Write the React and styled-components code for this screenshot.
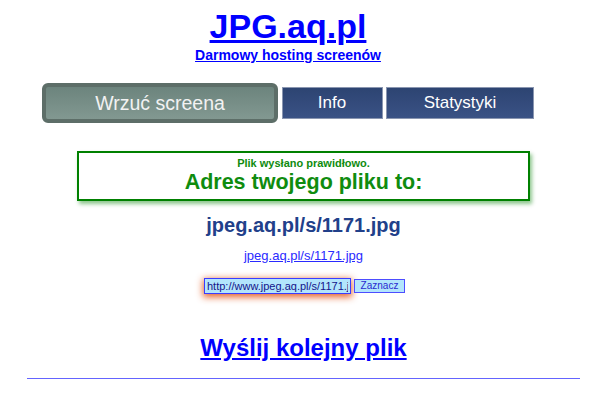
import React from 'react'
import styled, { createGlobalStyle } from 'styled-components'

const GlobalStyle = createGlobalStyle`
  body {
    margin: 0;
    background: #fff;
    font-family: 'Liberation Sans', Arial, sans-serif;
  }
`

const Header = styled.header`
  width: 576px;
  padding-top: 7px;
  text-align: center;
`

const Title = styled.a`
  display: inline-block;
  color: #0000ff;
  font-size: 34px;
  line-height: 38px;
  font-weight: 700;
  text-decoration: underline;
  text-decoration-thickness: 3px;
`

const Subtitle = styled.div`
  margin-top: 2px;
  line-height: 16px;

  a {
    color: #0000ff;
    font-size: 14px;
    font-weight: 700;
    text-decoration: underline;
  }
`

const Nav = styled.nav`
  display: flex;
  justify-content: center;
  align-items: center;
  gap: 3.5px;
  margin-top: 20px;
`

const NavItem = styled.div`
  box-sizing: border-box;
  width: ${(p) => p.$width}px;
  height: 32px;
  display: flex;
  align-items: center;
  justify-content: center;
  background: linear-gradient(#2d4472, #3a5285);
  border: 1px solid #8a96b0;
  color: #fff;
  font-size: 17px;
  cursor: pointer;
`

const ActiveItem = styled(NavItem)`
  height: 40px;
  background: linear-gradient(#6c847d, #829891);
  border: 4px solid #5d6e68;
  border-radius: 6px;
  color: #f2f2f2;
  font-size: 19.5px;
`

const Main = styled.main`
  margin-left: 27px;
  width: 553px;
  text-align: center;
`

const SuccessBox = styled.div`
  margin: 28px 50px 0;
  padding: 4px 0 5px;
  border: 2px solid #008000;
  box-shadow: 2px 3px 4px rgba(0, 128, 0, 0.45);
  color: #0f8c0f;
  font-weight: 700;
`

const SuccessNote = styled.div`
  font-size: 11px;
  line-height: 13px;
`

const SuccessHead = styled.div`
  font-size: 21.5px;
  line-height: 24px;
`

const FileUrl = styled.div`
  margin-top: 13px;
  color: #21408a;
  font-size: 20px;
  line-height: 23px;
  font-weight: 700;
`

const FileLink = styled.a`
  display: inline-block;
  margin-top: 11px;
  color: #2a2aff;
  font-size: 13px;
  line-height: 15px;
  text-decoration: underline;
`

const CopyRow = styled.div`
  display: flex;
  justify-content: center;
  align-items: center;
  gap: 3px;
  margin-top: 14px;
  padding-left: 2px;
`

const UrlInput = styled.input`
  box-sizing: border-box;
  width: 147px;
  height: 16px;
  padding: 0 2px;
  border: 1px solid #3b3bff;
  background: #b3e5fc;
  color: #14148a;
  font-family: 'Liberation Sans', Arial, sans-serif;
  font-size: 11px;
  box-shadow: 0 2px 7px 1px rgba(225, 80, 20, 0.9);
  outline: none;
`

const SelectButton = styled.button`
  box-sizing: border-box;
  width: 51px;
  height: 14px;
  padding: 0;
  border: 1px solid #4d4dff;
  background: #b3e5fc;
  color: #2a2ad0;
  font-family: 'Liberation Sans', Arial, sans-serif;
  font-size: 10px;
  line-height: 12px;
  cursor: pointer;
`

const NextLink = styled.a`
  display: inline-block;
  margin-top: 40px;
  color: #0000ff;
  font-size: 24px;
  line-height: 28px;
  font-weight: 700;
  text-decoration: underline;
`

const Rule = styled.hr`
  margin: 16px 0 0;
  border: 0;
  border-top: 1px solid #6464ff;
`

const App = () => {
  const url = 'http://www.jpeg.aq.pl/s/1171.jpg'

  return (
    <>
      <GlobalStyle />
      <Header>
        <Title href="#">JPG.aq.pl</Title>
        <Subtitle>
          <a href="#">Darmowy hosting screenów</a>
        </Subtitle>
        <Nav>
          <ActiveItem $width={236}>Wrzuć screena</ActiveItem>
          <NavItem $width={101}>Info</NavItem>
          <NavItem $width={148}>Statystyki</NavItem>
        </Nav>
      </Header>
      <Main>
        <SuccessBox>
          <SuccessNote>Plik wysłano prawidłowo.</SuccessNote>
          <SuccessHead>Adres twojego pliku to:</SuccessHead>
        </SuccessBox>
        <FileUrl>jpeg.aq.pl/s/1171.jpg</FileUrl>
        <FileLink href="#">jpeg.aq.pl/s/1171.jpg</FileLink>
        <CopyRow>
          <UrlInput type="text" defaultValue={url} readOnly />
          <SelectButton type="button">Zaznacz</SelectButton>
        </CopyRow>
        <NextLink href="#">Wyślij kolejny plik</NextLink>
        <Rule />
      </Main>
    </>
  )
}

export default App
